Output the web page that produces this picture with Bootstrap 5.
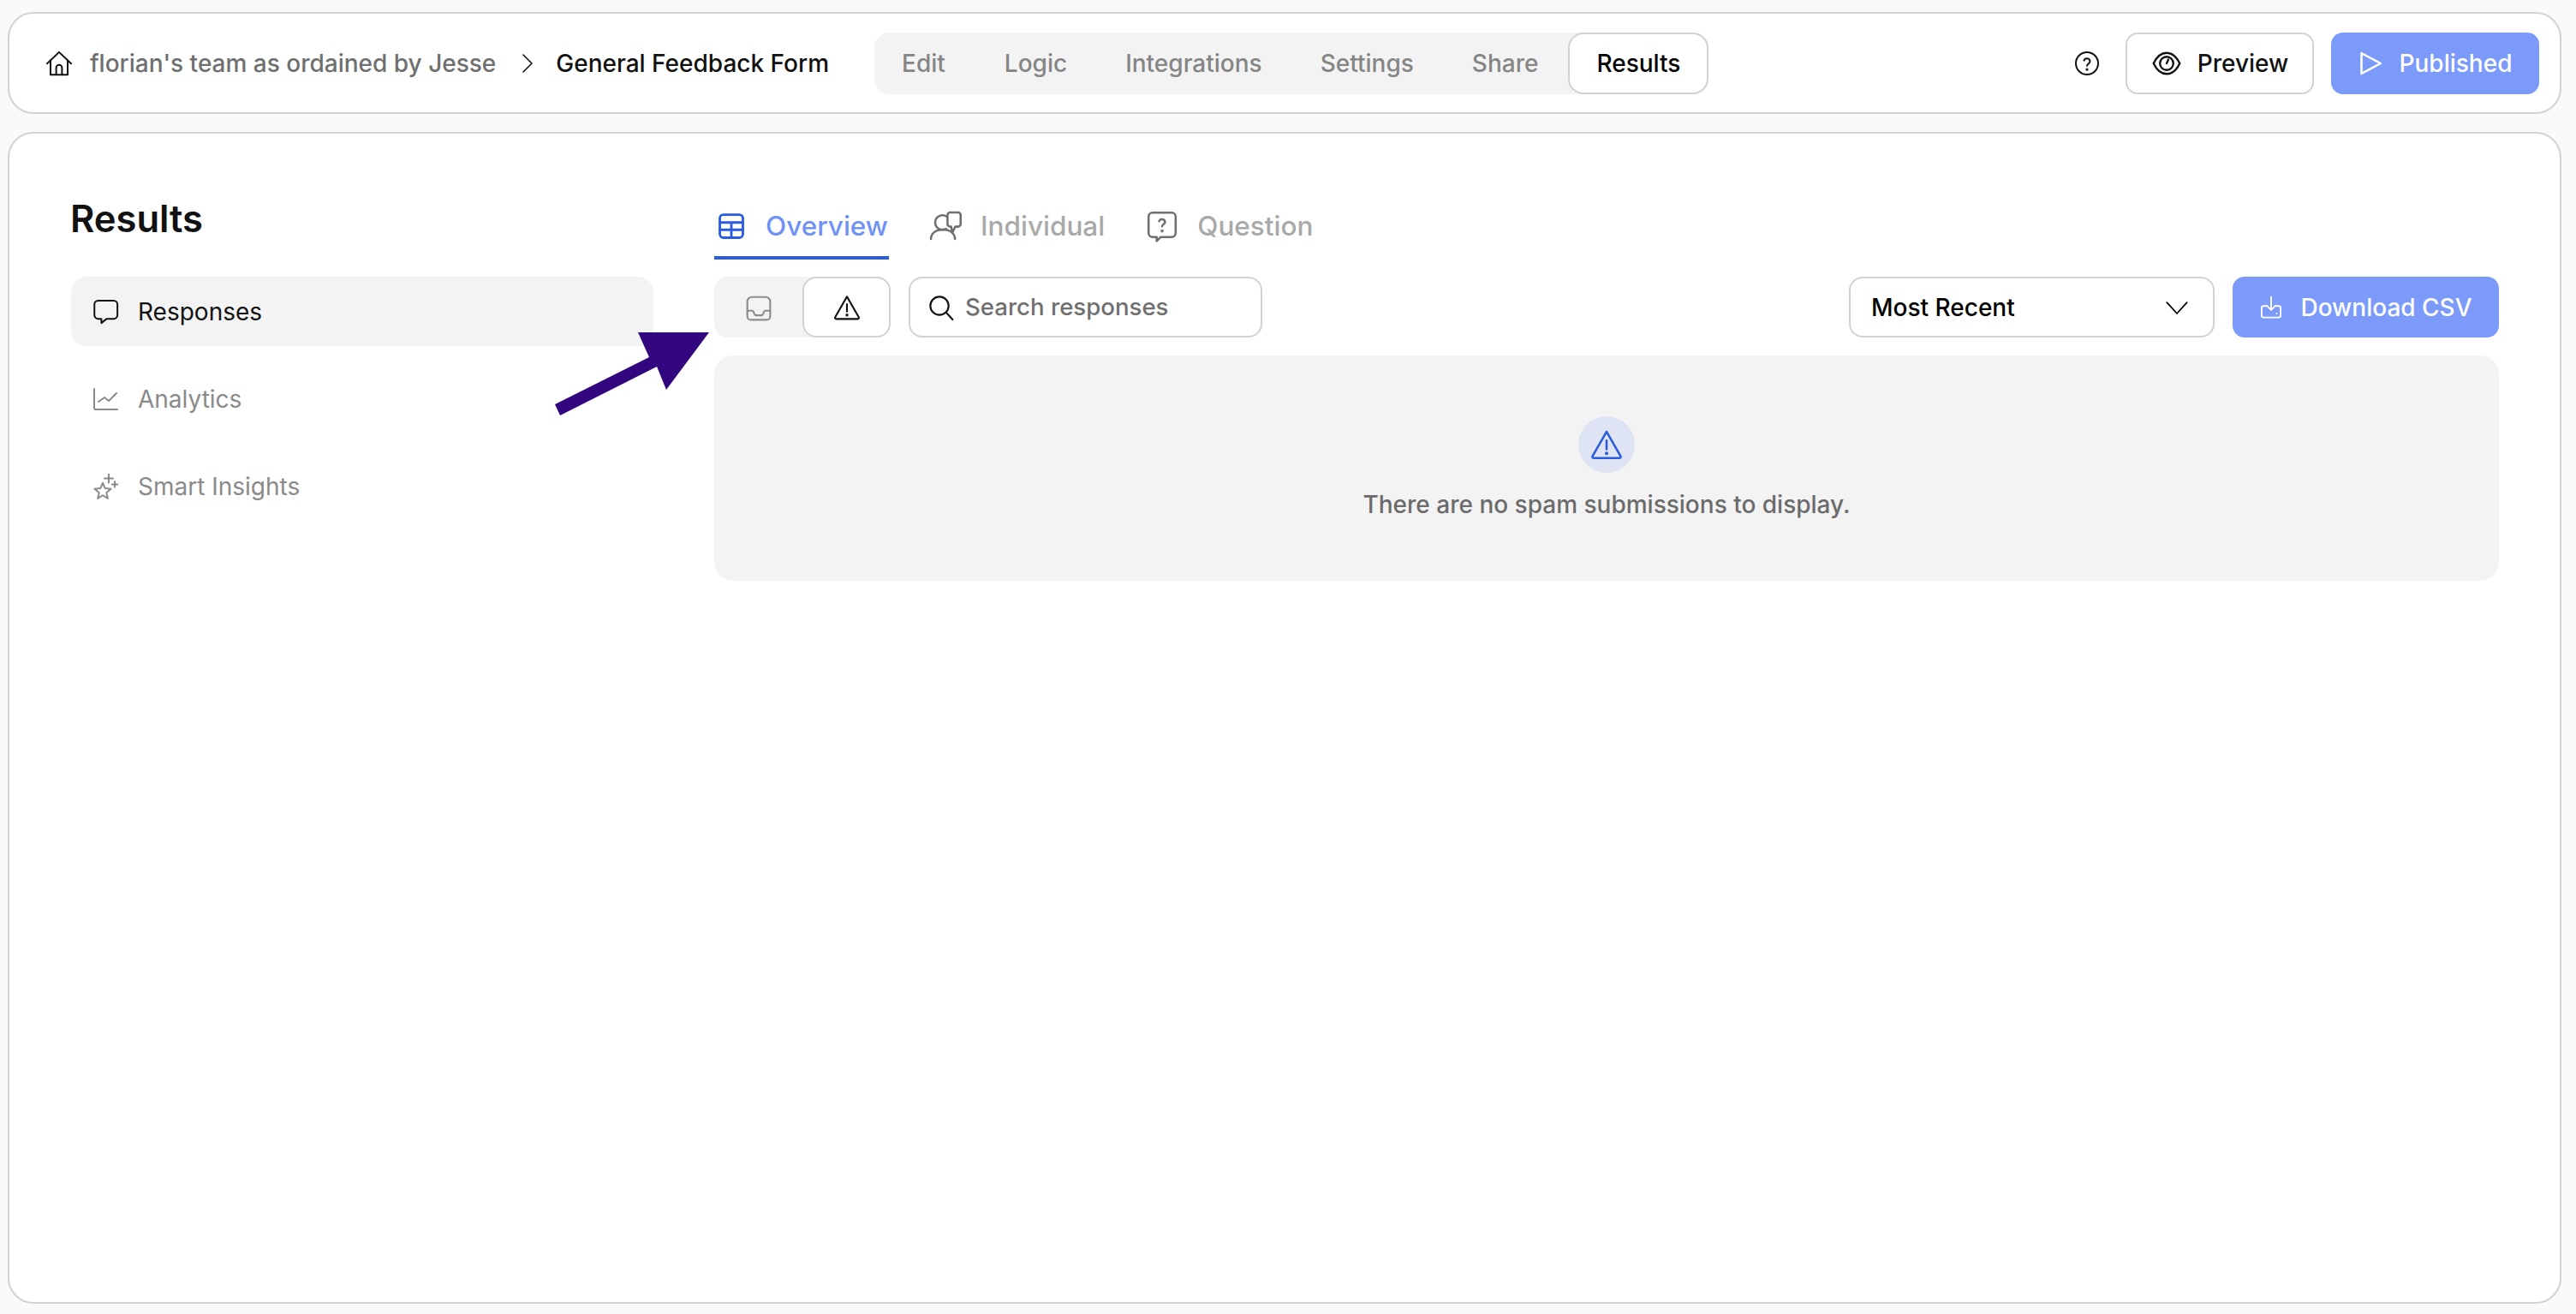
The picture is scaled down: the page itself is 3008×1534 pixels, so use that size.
<!doctype html>
<html lang="en">
<head>
<meta charset="utf-8">
<title>Results</title>
<link href="https://cdn.jsdelivr.net/npm/bootstrap@5.3.0/dist/css/bootstrap.min.css" rel="stylesheet">
<style>
html,body{height:100%}
body{background:#fafafa;font-family:Inter,"Liberation Sans",sans-serif;font-size:28px;font-weight:500;color:#111;position:relative;overflow:hidden}
.app-shell{height:100%;padding:14px 17px 12px 9px;gap:21px}
svg.ico{fill:none;stroke:currentColor;stroke-width:1.6;stroke-linecap:round;stroke-linejoin:round;flex:none}
.panel-box{background:#fff;border:2px solid #d2d2d2;border-radius:30px}
.top-bar{height:119px;padding:0 24px 0 43px}
.crumb-home{width:30px;height:30px;color:#111;margin-right:21px}
.crumb-team{color:#6f6f6f}
.crumb-sep{width:14px;height:24px;margin:0 26px 0 30px;color:#111}
.crumb-form{color:#111}
.step-tabs{margin-left:53px;background:#f3f3f3;border-radius:18px;height:72px}
.step-tabs .nav-link{color:#858585;font-size:28px;padding:0 32px;height:72px;line-height:68px;border:2px solid transparent;border-radius:18px}
.step-tabs .nav-link:first-child{padding-left:30px;padding-right:33px}
.step-tabs .nav-link.active{background:#fff;color:#000;border-color:#d2d2d2;padding:0 31px;margin-left:1px}
.act-btn{height:72px;font-size:28px;font-weight:500;border-radius:14px;gap:18px;--bs-btn-padding-x:0;--bs-btn-padding-y:0}
.act-light{background:#fff;border:2px solid #d2d2d2;color:#111;width:220px}
.act-blue,.act-blue:disabled{background:#7b9af9;border:0;color:#fff;opacity:1}
.act-pub{width:243px;margin-left:20px;gap:20px}
.act-pub svg{stroke-width:1.800!important}
.help-ico{width:30px;height:30px;color:#111;margin-right:30px}
.main-body{padding:0 71px 0 72px}
.side-col{width:680px;margin-right:71px;padding-top:72px}
.side-title{font-size:43.500px;font-weight:600;line-height:54px;color:#111;margin-bottom:41px;margin-left:-1px}
.side-link{height:81px;border-radius:18px;padding:0 26px;gap:22px;color:#8a8a8a;margin-bottom:21px;font-size:28px;font-weight:400}
.side-link.active{background:#f3f3f3;color:#111}
.side-link svg{width:30px;height:30px}
.work-col{padding-top:56px}
.view-tabs{gap:44px;height:91px;margin-bottom:20px}
.view-tabs .nav-link{height:91px;padding:16px 1px 0 3px;gap:22px;font-size:31.500px;color:#a9a9a9;border-bottom:4px solid transparent}
.view-tabs .nav-link svg{color:#6f6f6f;width:38px;height:38px}
.view-tabs .nav-link.active{color:#7092f5;border-bottom-color:#2b5be0;gap:23px}
.view-tabs .nav-link.active svg{color:#2b5be0;width:34px;height:34px;stroke-width:2}
.tool-row{height:71px;gap:21px}
.seg-wrap{width:206px;background:#f3f3f3;border-radius:16px}
.seg-item{width:103px;height:71px;border:2px solid transparent;border-radius:16px;background:transparent;padding:0;color:#8c8c8c}
.seg-item.active{background:#fff;border-color:#d2d2d2;color:#111}
.seg-item svg{width:32px;height:32px}
.find-box{width:413px;height:71px;border:2px solid #d2d2d2;border-radius:16px;padding:0 20px;gap:12px;background:#fff}
.find-box svg{width:32px;height:32px;color:#111}
.find-box .form-control{border:0;padding:0;font-size:27.600px;font-weight:500;box-shadow:none;color:#111;background:transparent}
.find-box .form-control::placeholder{color:#6f6f6f;opacity:1}
.sort-btn{width:427px;height:71px;border:2px solid #d2d2d2;border-radius:16px;background:#fff;color:#000;font-size:28px;font-weight:500;padding:0 28px 0 24px}
.sort-btn svg{width:28px;height:28px;stroke-width:1.5}
.csv-btn{width:311px;height:71px;font-size:28px;border-radius:14px;gap:20px;font-weight:500}
.empty-box{height:263px;background:#f3f3f3;border-radius:22px;margin-top:21px;padding-top:71px;color:#6b6b6b}
.empty-dot{width:66px;height:66px;border-radius:50%;background:#dfe4f5;color:#2b5be0;margin-bottom:19px}
.empty-dot svg{width:38px;height:38px}
.empty-text{font-size:28px;line-height:36px;font-weight:500}
.note-arrow{position:absolute;left:640px;top:380px;width:200px;height:115px;pointer-events:none}
</style>
</head>
<body>
<div class="app-shell d-flex flex-column">
  <header class="panel-box top-bar d-flex align-items-center flex-none">
    <svg class="ico crumb-home" viewBox="0 0 24 24"><path d="M.8 12.200 12 1.500l11.200 10.700"/><path d="M4 9v13.500h16V9"/><path d="M9.300 22.500v-6.500a2.700 2.700 0 0 1 5.400 0v6.500"/></svg>
    <span class="crumb-team">florian's team as ordained by Jesse</span>
    <svg class="ico crumb-sep" viewBox="0 0 14 24"><path d="M2 2l10 10L2 22"/></svg>
    <span class="crumb-form">General Feedback Form</span>
    <nav class="nav step-tabs flex-nowrap">
      <a class="nav-link" href="#">Edit</a>
      <a class="nav-link" href="#">Logic</a>
      <a class="nav-link" href="#">Integrations</a>
      <a class="nav-link" href="#">Settings</a>
      <a class="nav-link" href="#">Share</a>
      <a class="nav-link active" href="#">Results</a>
    </nav>
    <svg class="ico help-ico ms-auto" viewBox="0 0 24 24"><circle cx="12" cy="12" r="10.400"/><path d="M9.200 9.300a2.900 2.900 0 0 1 5.600.9c0 1.900-2.800 2.400-2.800 4"/><circle cx="12" cy="17.600" r=".5" fill="currentColor"/></svg>
    <button class="btn act-btn act-light d-flex align-items-center justify-content-center" type="button">
      <svg class="ico" width="36" height="36" viewBox="0 0 24 24"><path d="M1.800 12C4.200 7 7.800 3.800 12 3.800S19.800 7 22.200 12C19.800 17 16.200 20.200 12 20.200S4.200 17 1.800 12Z"/><circle cx="12" cy="12" r="5.200"/><path d="M12 12l1.300-3"/></svg>
      Preview
    </button>
    <button class="btn act-btn act-blue act-pub d-flex align-items-center justify-content-center" type="button">
      <svg class="ico" width="28" height="34" viewBox="0 0 20 24"><path d="M2.500 3.500 18.500 12 2.500 20.500Z"/></svg>
      Published
    </button>
  </header>
  <main class="panel-box main-body flex-grow-1 d-flex">
    <aside class="side-col flex-none">
      <h1 class="side-title">Results</h1>
      <a class="side-link active d-flex align-items-center text-decoration-none" href="#">
        <svg class="ico" viewBox="0 0 24 24"><path d="M4.500 1.500h14.500a3.500 3.500 0 0 1 3.500 3.500v10a3.500 3.500 0 0 1-3.500 3.500h-6.500l-5 4v-4h-3a3.500 3.500 0 0 1-3.500-3.500V5a3.500 3.500 0 0 1 3.500-3.500Z"/></svg>
        Responses
      </a>
      <a class="side-link d-flex align-items-center text-decoration-none" href="#">
        <svg class="ico" viewBox="0 0 24 24"><path d="M.8 2.400v17.700a1.500 1.500 0 0 0 1.500 1.500h20.100"/><path d="M4.800 14.400l5.600-4 4 3.200 7.200-7.200"/></svg>
        Analytics
      </a>
      <a class="side-link d-flex align-items-center text-decoration-none" href="#">
        <svg class="ico" viewBox="0 0 24 24"><path d="M8.800 8.600 10.920 13.690 16.400 14.130 12.220 17.710 13.500 23.070 8.800 20.200 4.100 23.070 5.380 17.710 1.200 14.130 6.680 13.690Z"/><path d="M14.400.4v8M10.400 4.400h8M20 7.400v5.200M17.400 10h5.200"/></svg>
        Smart Insights
      </a>
    </aside>
    <section class="work-col flex-grow-1 d-flex flex-column">
      <nav class="nav view-tabs flex-nowrap">
        <a class="nav-link active d-flex align-items-center" href="#">
          <svg class="ico" viewBox="0 0 24 24"><rect x="2.500" y="2.500" width="19" height="19" rx="3"/><path d="M2.500 9h19M2.500 15h19M12 9v12.500"/></svg>
          Overview
        </a>
        <a class="nav-link d-flex align-items-center" href="#">
          <svg class="ico" viewBox="0 0 24 24"><path d="M1.300 21.500c0-4 3.500-7 8.850-7s8.850 3 8.850 7"/><path d="M13 5A5.400 5.400 0 1 0 12.500 14"/><path d="M15.500 1.900h5.700a2 2 0 0 1 2 2v6.500a2 2 0 0 1-2 2h-2l-2.200 4.500-.8-4.500h-.7a2 2 0 0 1-2-2V3.900a2 2 0 0 1 2-2Z"/></svg>
          Individual
        </a>
        <a class="nav-link d-flex align-items-center" href="#">
          <svg class="ico" viewBox="0 0 24 24"><path d="M5 2h14a3 3 0 0 1 3 3v12a3 3 0 0 1-3 3h-8L8 23v-3H5a3 3 0 0 1-3-3V5a3 3 0 0 1 3-3Z"/><path d="M9.800 8.300a2.300 2.300 0 0 1 4.400.7c0 1.500-2.200 1.700-2.200 3.200"/><circle cx="12" cy="15.500" r=".4" fill="currentColor"/></svg>
          Question
        </a>
      </nav>
      <div class="tool-row d-flex align-items-center">
        <div class="seg-wrap d-flex">
          <button class="seg-item d-flex align-items-center justify-content-center" type="button" aria-label="Inbox">
            <svg class="ico" viewBox="0 0 24 24"><path d="M6 2.800h12a4 4 0 0 1 4 4v13a3 3 0 0 1-3 3H5a3 3 0 0 1-3-3v-13a4 4 0 0 1 4-4Z"/><path d="M2 14.800h4.500c.8 0 1 1 1.500 2.500.5 1.300 1.500 1.500 2 1.500h4c.5 0 1.500-.2 2-1.500.5-1.500.7-2.500 1.500-2.500H22"/></svg>
          </button>
          <button class="seg-item active d-flex align-items-center justify-content-center" type="button" aria-label="Spam">
            <svg class="ico" viewBox="0 0 24 24"><path d="M12 2.500 22.300 20.500a1 1 0 0 1-.9 1.500H2.600a1 1 0 0 1-.9-1.500Z"/><path d="M12 9v6.500"/><circle cx="12" cy="18.500" r=".5" fill="currentColor"/></svg>
          </button>
        </div>
        <label class="find-box d-flex align-items-center mb-0">
          <svg class="ico" viewBox="0 0 24 24"><circle cx="10.500" cy="10.500" r="8"/><path d="M16.500 16.500 22 22.500"/></svg>
          <input class="form-control" type="text" placeholder="Search responses">
        </label>
        <button class="sort-btn d-flex align-items-center justify-content-between ms-auto" type="button">
          Most Recent
          <svg class="ico" viewBox="0 0 24 24"><path d="M2 7l10 11L22 7"/></svg>
        </button>
        <button class="btn act-blue csv-btn d-flex align-items-center justify-content-center" type="button">
          <svg class="ico" width="28" height="30" viewBox="0 0 24 24"><path d="M12 1.500V14M7.500 10l4.500 4.500 4.500-4.500"/><path d="M7 10.500H4.500a2 2 0 0 0-2 2V20a2 2 0 0 0 2 2h15a2 2 0 0 0 2-2v-7.500a2 2 0 0 0-2-2H17"/><path d="M17.500 18h.1"/></svg>
          Download CSV
        </button>
      </div>
      <div class="empty-box d-flex flex-column align-items-center">
        <div class="empty-dot d-flex align-items-center justify-content-center">
          <svg class="ico" viewBox="0 0 24 24"><path d="M12 2.500 22.300 20.500a1 1 0 0 1-.9 1.500H2.600a1 1 0 0 1-.9-1.500Z"/><path d="M12 9v6.500"/><circle cx="12" cy="18.500" r=".5" fill="currentColor"/></svg>
        </div>
        <div class="empty-text">There are no spam submissions to display.</div>
      </div>
    </section>
  </main>
</div>
<svg class="note-arrow" viewBox="640 380 200 115" aria-hidden="true"><polygon points="648,472 654,485 767,428 778,455 828,388 745,388 758,417" fill="#32067f"/></svg>
<script src="https://cdn.jsdelivr.net/npm/bootstrap@5.3.0/dist/js/bootstrap.bundle.min.js"></script>
</body>
</html>
